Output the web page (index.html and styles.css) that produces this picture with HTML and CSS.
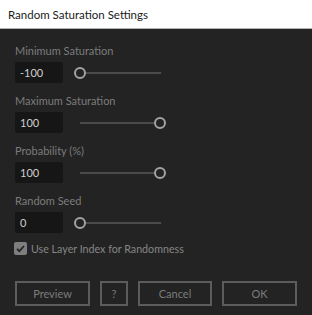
FILE: index.html
```html
<!DOCTYPE html>
<html>
<head>
<meta charset="utf-8">
<link rel="stylesheet" href="styles.css">
</head>
<body>
<div class="titlebar">Random Saturation Settings</div>
<div class="content">
  <div class="field">
    <div class="label">Minimum Saturation</div>
    <div class="row">
      <div class="input">-100</div>
      <svg class="slider" width="92" height="14" viewBox="0 0 92 14"><line x1="12" y1="7" x2="87" y2="7" class="track"/><circle cx="6" cy="7" r="5" class="thumb"/></svg>
    </div>
  </div>
  <div class="field">
    <div class="label">Maximum Saturation</div>
    <div class="row">
      <div class="input">100</div>
      <svg class="slider" width="92" height="14" viewBox="0 0 92 14"><line x1="6" y1="7" x2="80" y2="7" class="track"/><circle cx="86" cy="7" r="5" class="thumb"/></svg>
    </div>
  </div>
  <div class="field">
    <div class="label">Probability (%)</div>
    <div class="row">
      <div class="input">100</div>
      <svg class="slider" width="92" height="14" viewBox="0 0 92 14"><line x1="6" y1="7" x2="80" y2="7" class="track"/><circle cx="86" cy="7" r="5" class="thumb"/></svg>
    </div>
  </div>
  <div class="field">
    <div class="label">Random Seed</div>
    <div class="row">
      <div class="input">0</div>
      <svg class="slider" width="92" height="14" viewBox="0 0 92 14"><line x1="12" y1="7" x2="87" y2="7" class="track"/><circle cx="6" cy="7" r="5" class="thumb"/></svg>
    </div>
  </div>
  <div class="check">
    <span class="box"><svg width="13" height="13" viewBox="0 0 13 13"><path d="M3 6.8 L5.4 9.2 L10 4" fill="none" stroke="#262626" stroke-width="1.8"/></svg></span>
    <span class="check-label">Use Layer Index for Randomness</span>
  </div>
  <div class="buttons">
    <div class="btn w-preview">Preview</div>
    <div class="btn w-help">?</div>
    <div class="btn w-cancel">Cancel</div>
    <div class="btn w-ok">OK</div>
  </div>
</div>
</body>
</html>
```
FILE: styles.css
```css
html, body {
  margin: 0;
  padding: 0;
  background: #232323;
  font-family: Lato, "Noto Sans", sans-serif;
}
.titlebar {
  background: #ffffff;
  border-bottom: 1px solid #b4b4b4;
  color: #1a1a1a;
  font-size: 11.5px;
  line-height: 30px;
  padding-left: 8px;
  box-sizing: border-box;
  height: 29px;
}
.content {
  padding: 13px 0 0 15px;
}
.field {
  margin-bottom: 9px;
}
.label {
  color: #7c7c7c;
  font-size: 11px;
  line-height: 17px;
  height: 17px;
  margin-bottom: 3px;
}
.row {
  display: flex;
  align-items: center;
  gap: 11px;
  height: 21px;
}
.input {
  width: 48px;
  height: 21px;
  background: #161616;
  border-radius: 2px;
  color: #cfcfcf;
  font-size: 11px;
  line-height: 21px;
  padding-left: 5px;
  box-sizing: border-box;
}
.slider {
  display: block;
}
.track {
  stroke: #4b4b4b;
  stroke-width: 2;
}
.thumb {
  fill: #232323;
  stroke: #a3a3a3;
  stroke-width: 2;
}
.check {
  display: flex;
  align-items: center;
  gap: 4px;
  height: 13px;
  margin-top: 1px;
  margin-left: -1px;
}
.box {
  width: 13px;
  height: 13px;
  background: #7e7e7e;
  border-radius: 2px;
  display: block;
}
.box svg {
  display: block;
}
.check-label {
  color: #868686;
  font-size: 10.7px;
  line-height: 13px;
}
.buttons {
  display: flex;
  gap: 10px;
  margin-top: 26px;
}
.btn {
  height: 25px;
  box-sizing: border-box;
  border: 2px solid #5c5c5c;
  color: #7c7c7c;
  font-size: 11px;
  line-height: 21px;
  text-align: center;
}
.w-preview { width: 75px; }
.w-help { width: 28px; }
.w-cancel { width: 74px; }
.w-ok { width: 75px; }
```
